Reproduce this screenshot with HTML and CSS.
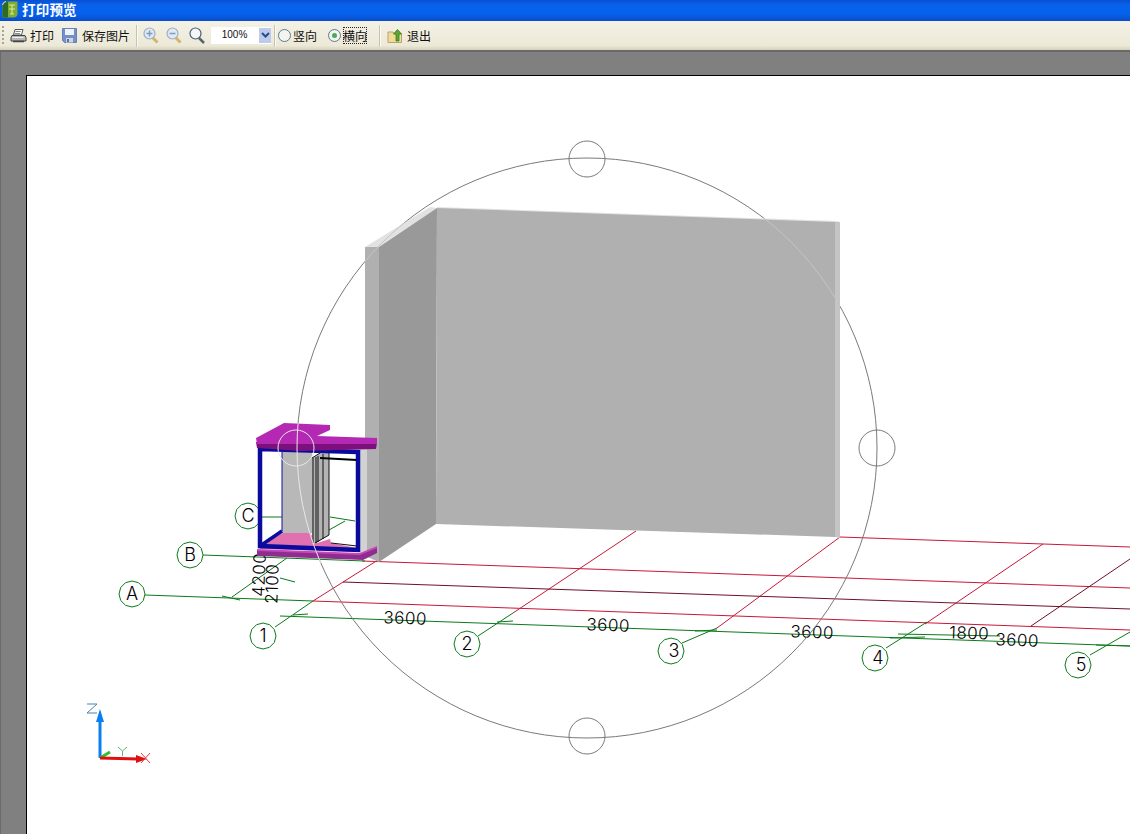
FILE: index.html
```html
<!DOCTYPE html>
<html lang="zh">
<head>
<meta charset="utf-8">
<title>打印预览</title>
<link rel="stylesheet" href="styles.css">
</head>
<body>
<div class="app">
  <header class="titlebar">
    <svg class="appicon" width="16" height="17" viewBox="0 0 16 17"><path d="M0.500 16.500V5Q1 1 5 0.500H15.500V13Q15 16 12 16.500Z" fill="#7fae2e"/><path d="M0.500 16.500V5Q1 1 5 0.500H6V16.500Z" fill="#2f6a22"/><path d="M0.500 4Q1 1 4 0.500" stroke="#f4e8a0" fill="none"/><path d="M7 4h6M7 8h6M10 4v9M8 13h4" stroke="#d8e8a8" stroke-width="1.100" fill="none"/></svg>
    <span class="title">打印预览</span>
  </header>
  <nav class="toolbar">
    <span class="grip"></span>
    <button class="tool t-print">
      <svg width="17" height="16" viewBox="0 0 17 16"><path d="M5 1.500h8l-1.500 5.500h-8z" fill="#fff" stroke="#555"/><path d="M5.500 3.500h5M5 5.500h5" stroke="#888"/><path d="M2 7.500h13l1 2v3.500H1v-3.500z" fill="#b8b8b8" stroke="#444"/><path d="M3 13.500h11" stroke="#444" stroke-width="1.500"/><path d="M2.500 9.500h11" stroke="#eee"/></svg>
      <span>打印</span>
    </button>
    <button class="tool t-save">
      <svg width="15" height="15" viewBox="0 0 15 15"><path d="M0.500 0.500h14v14h-12l-2-2z" fill="#7590c8" stroke="#6680b8"/><rect x="3" y="1" width="9" height="6" fill="#eef2fa"/><rect x="4" y="10" width="7" height="4.500" fill="#d0d4e0"/><rect x="5" y="11" width="2" height="3" fill="#5a70a8"/></svg>
      <span>保存图片</span>
    </button>
    <span class="sep s1"></span>
    <div class="zooms">
      <svg width="16" height="17" viewBox="0 0 16 17"><path d="M9.500 10.500l5 5" stroke="#d4b468" stroke-width="3"/><circle cx="6.500" cy="6.500" r="5.500" fill="#dfe8f4" stroke="#a0aec0" stroke-width="1.200"/><path d="M3.500 6.500h6M6.500 3.500v6" stroke="#7f9cc0" stroke-width="1.500"/></svg>
      <svg width="16" height="17" viewBox="0 0 16 17"><path d="M9.500 10.500l5 5" stroke="#d4b468" stroke-width="3"/><circle cx="6.500" cy="6.500" r="5.500" fill="#dfe8f4" stroke="#a0aec0" stroke-width="1.200"/><path d="M3.500 6.500h6" stroke="#7f9cc0" stroke-width="1.500"/></svg>
      <svg width="16" height="17" viewBox="0 0 16 17"><path d="M10 11l5 5" stroke="#5a6470" stroke-width="2.500"/><circle cx="6.500" cy="6.500" r="5.500" fill="#f4f6f8" stroke="#4a5c70" stroke-width="1.200"/></svg>
    </div>
    <div class="combo">
      <span class="combo-val">100%</span>
      <span class="combo-btn"><svg width="9" height="7" viewBox="0 0 9 7"><path d="M1 1l3.500 3.500L8 1" stroke="#2a4a8a" stroke-width="2" fill="none"/></svg></span>
    </div>
    <span class="sep s2"></span>
    <label class="radio r1"><span class="dot"></span><span>竖向</span></label>
    <label class="radio r2"><span class="dot on"></span><span class="focus">横向</span></label>
    <span class="sep s3"></span>
    <button class="tool t-exit">
      <svg width="16" height="16" viewBox="0 0 16 16"><path d="M1 4h5l1 1.500h7.500v9H1z" fill="#f0dc98" stroke="#b8a468"/><path d="M9 13V6H6.500L10.500 1.500 14.500 6H12v7z" fill="#58a838" stroke="#387818" stroke-width=".8"/></svg>
      <span>退出</span>
    </button>
  </nav>
  <main class="workspace">
    <section class="paper">
      <svg class="drawing" width="1103" height="758" viewBox="27 76 1103 758">
        <defs>
          <clipPath id="clip-wall"><polygon points="365,247 430,207 838,221 840,538 436,524 379,562 365,555"/></clipPath>
          <clipPath id="clip-box"><rect x="257" y="423" width="122" height="140"/></clipPath>
          <polygon id="bubble" points="13,0 11.300,6.500 6.500,11.300 0,13 -6.500,11.300 -11.300,6.500 -13,0 -11.300,-6.500 -6.500,-11.300 0,-13 6.500,-11.300 11.300,-6.500"/>
        </defs>

        <g class="red">
          <line x1="362" y1="561" x2="1130" y2="588"/>
          <line x1="313" y1="601" x2="1130" y2="630"/>
          <line x1="840" y1="537" x2="1130" y2="547"/>
          <line x1="313" y1="601" x2="378" y2="560"/>
          <line x1="513" y1="613" x2="636" y2="531"/>
          <line x1="717" y1="628" x2="840" y2="537"/>
          <line x1="925" y1="624" x2="1043" y2="544"/>
        </g>
        <g class="maroon">
          <line x1="343" y1="582" x2="1130" y2="609"/>
          <line x1="1031" y1="626" x2="1130" y2="559"/>
        </g>
        <g class="green">
          <line x1="203" y1="555" x2="365" y2="561"/>
          <line x1="145" y1="595" x2="313" y2="601"/>
          <line x1="222" y1="596" x2="240" y2="600"/>
          <line x1="258" y1="517" x2="282" y2="517"/>
          <line x1="330" y1="517" x2="355" y2="521"/>
          <line x1="329" y1="530" x2="345" y2="521"/>
          <line x1="232" y1="597" x2="287" y2="558"/>
          <line x1="280" y1="578" x2="295" y2="582"/>
          <line x1="275" y1="627" x2="313" y2="601"/>
          <line x1="280" y1="616" x2="1130" y2="646"/>
          <line x1="293" y1="615" x2="308" y2="614"/>
          <line x1="478" y1="636" x2="513" y2="613"/>
          <line x1="497" y1="622" x2="513" y2="621"/>
          <line x1="682" y1="643" x2="717" y2="628"/>
          <line x1="695" y1="631" x2="717" y2="630"/>
          <line x1="886" y1="648" x2="927" y2="622"/>
          <line x1="898" y1="634" x2="1000" y2="636"/>
          <line x1="890" y1="638" x2="925" y2="637"/>
          <line x1="1090" y1="655" x2="1130" y2="632"/>
          <line x1="1096" y1="645" x2="1130" y2="646"/>
          <use href="#bubble" x="248" y="516"/>
          <use href="#bubble" x="190" y="555"/>
          <use href="#bubble" x="132" y="594"/>
          <use href="#bubble" x="263" y="636"/>
          <use href="#bubble" x="467" y="644"/>
          <use href="#bubble" x="671" y="651"/>
          <use href="#bubble" x="875" y="658"/>
          <use href="#bubble" x="1078" y="665"/>
        </g>

        <g class="cad-text">
          <text x="248" y="522" class="lbl">C</text>
          <text x="190" y="561" class="lbl">B</text>
          <text x="132" y="600" class="lbl">A</text>
          <text x="263" y="642" class="lbl">1</text>
          <text x="467" y="650" class="lbl">2</text>
          <text x="674" y="657" class="lbl">3</text>
          <text x="878" y="664" class="lbl">4</text>
          <text x="1081" y="671" class="lbl">5</text>
          <text transform="translate(405 624) rotate(2)" class="dim">3600</text>
          <text transform="translate(608 631) rotate(2)" class="dim">3600</text>
          <text transform="translate(812 638) rotate(2)" class="dim">3600</text>
          <text transform="translate(969 639) rotate(2)" class="dim">1800</text>
          <text transform="translate(1017 646) rotate(2)" class="dim">3600</text>
          <text transform="translate(265 575) rotate(-88)" class="dim">4200</text>
          <text transform="translate(278 584) rotate(-88)" class="dim">2100</text>
        </g>

        <circle class="gizmo" cx="587" cy="448" r="290"/>
        <circle class="gizmo" cx="587" cy="159" r="18"/>
        <circle class="gizmo" cx="587" cy="736" r="18"/>
        <circle class="gizmo" cx="877" cy="448" r="18"/>

        <polygon class="w-top" points="365,247 430,207 437,208 379,247"/>
        <polygon class="w-top" points="437,207 838,221 838,223 437,209"/>
        <polygon class="w-side" points="379,247 437,208 436,524 379,562"/>
        <polygon class="w-narrow" points="365,247 379,247 379,562 365,556"/>
        <polygon class="w-main" points="437,208 835,222 835,537 436,524"/>
        <polygon class="w-edge" points="835,222 840,222 840,538 835,537"/>
        <circle class="gizmo-wall" cx="587" cy="448" r="290" clip-path="url(#clip-wall)"/>

        <polygon class="s-back" points="360,448 367,448 367,559 360,556"/>
        <rect class="s-core" x="282" y="452" width="30" height="81"/>
        <line class="s-thin" x1="282" y1="452" x2="282" y2="531"/>
        <polygon class="s-floor" points="260,544 283,533 310,533 317,543 330,539 331,543 357,548 357,552 260,549"/>
        <polygon class="s-col" points="312,458 320,453 329,453 329,535 315,544 312,544"/>
        <g class="s-black">
          <line x1="313" y1="458" x2="313" y2="543"/>
          <line x1="316" y1="457" x2="316" y2="543"/>
          <line x1="318" y1="456" x2="318" y2="542"/>
          <line x1="323" y1="454" x2="323" y2="539"/>
          <line x1="329" y1="453" x2="329" y2="535"/>
          <line x1="315" y1="543" x2="329" y2="535"/>
          <line x1="312" y1="458" x2="320" y2="453"/>
          <line x1="331" y1="543" x2="357" y2="546"/>
        </g>
        <line class="s-blackbar" x1="320" y1="458" x2="357" y2="460"/>
        <polygon class="s-lowtop" points="257,549 360,553 377,546 377,549 360,556 257,552"/>
        <polygon class="s-lowfront" points="257,551 360,555 377,548 377,553 363,560 257,556"/>
        <g class="s-blue">
          <polygon points="260,449 358,452 358,550 260,546"/>
          <line x1="260" y1="546" x2="282" y2="531"/>
        </g>
        <polygon class="s-slabfront" points="256,442 377,443 376,449 300,451 257,448"/>
        <polygon class="s-slabtop" points="284,423 330,425 330,430 317,436 377,438 377,444 257,444 256,438"/>
        <g clip-path="url(#clip-box)">
          <circle class="gizmo-box" cx="587" cy="448" r="290"/>
        </g>
        <circle class="gizmo-box" cx="296" cy="448" r="18"/>

        <g class="axes">
          <line class="ax-z" x1="100" y1="758" x2="100" y2="716"/>
          <polygon class="ax-zh" points="100,709 104,722 96,722"/>
          <line class="ax-y" x1="100" y1="758" x2="110" y2="752"/>
          <line class="ax-x" x1="100" y1="758" x2="138" y2="759"/>
          <polygon class="ax-xh" points="147,759 136,755 136,763"/>
          <path class="ax-zt" d="M87 704h10l-10 9h10"/>
          <path class="ax-yt" d="M118 747l4.500 4 4.500-4M122.500 751v5"/>
          <path class="ax-xt" d="M141 753l9 10M150 753l-9 10"/>
        </g>
      </svg>
    </section>
  </main>
</div>
</body>
</html>
```
FILE: styles.css
```css
html, body {
  margin: 0;
  padding: 0;
  height: 100%;
  overflow: hidden;
}
body {
  font-family: "Noto Sans CJK SC", "Liberation Sans", sans-serif;
  font-size: 12px;
  color: #111;
}
.app {
  display: flex;
  flex-direction: column;
  width: 1130px;
  height: 834px;
  overflow: hidden;
}
.titlebar {
  display: flex;
  align-items: center;
  gap: 4px;
  height: 21px;
  box-sizing: border-box;
  padding: 0 0 3px 2px;
  flex: none;
  background: linear-gradient(#0a50d0 0, #0862ee 25%, #0560ea 70%, #0a4cc8 100%);
}
.appicon { flex: none; }
.title {
  color: #fff;
  font-weight: 700;
  font-size: 13.500px;
  line-height: 18px;
  letter-spacing: .2px;
}
.toolbar {
  display: flex;
  align-items: center;
  height: 29px;
  flex: none;
  box-sizing: border-box;
  background: linear-gradient(#f4f2e6, #ece9d8 85%, #d4d0bc);
  padding-left: 2px;
}
.grip {
  width: 2px;
  height: 20px;
  flex: none;
  background: repeating-linear-gradient(#a8a594 0 2px, transparent 2px 4px);
}
.tool {
  display: flex;
  align-items: center;
  background: none;
  border: 0;
  padding: 0;
  font: inherit;
  color: #111;
  height: 20px;
}
.t-print { gap: 3px; margin-left: 6px; }
.t-save { gap: 5px; margin-left: 8px; }
.t-exit { gap: 4px; margin-left: 6px; }
.sep {
  width: 1px;
  height: 22px;
  flex: none;
  background: #c6c3b0;
  border-right: 1px solid #fbfaf4;
}
.s1 { margin-left: 6px; }
.zooms {
  display: flex;
  gap: 7px;
  margin-left: 5px;
  align-items: center;
}
.combo {
  display: flex;
  align-items: center;
  width: 60px;
  height: 17px;
  margin-left: 6px;
  background: #fff;
}
.combo-val {
  flex: 1;
  padding-bottom: 3px;
  padding-right: 1px;
  text-align: center;
  font-family: "Liberation Sans", sans-serif;
  font-size: 10px;
}
.combo-btn {
  display: flex;
  align-items: center;
  justify-content: center;
  width: 12px;
  height: 15px;
  background: #bccaec;
}
.s2 { margin-left: 3px; }
.radio {
  display: flex;
  align-items: center;
  gap: 2px;
}
.r1 { margin-left: 2px; }
.r2 { margin-left: 11px; }
.dot {
  display: flex;
  align-items: center;
  justify-content: center;
  box-sizing: border-box;
  width: 13px;
  height: 13px;
  border: 1px solid #5a7a98;
  border-radius: 50%;
  background: #f4f4ee;
}
.dot.on::after {
  content: "";
  width: 5px;
  height: 5px;
  border-radius: 50%;
  background: #4aa860;
}
.focus { outline: 1px dotted #222; outline-offset: -1px; }
.s3 { margin-left: 12px; }
.workspace {
  flex: 1;
  min-height: 0;
  background: #808080;
  padding: 25px 0 0 26px;
  overflow: hidden;
  box-shadow: inset 1px 2px 0 #6a6a6a;
}
.paper {
  background: #fff;
  border-top: 1px solid #000;
  border-left: 1px solid #000;
  height: 100%;
  box-sizing: border-box;
  overflow: hidden;
}
.drawing { display: block; }

.red line { stroke: #c81838; stroke-width: 1; }
.maroon line { stroke: #701028; stroke-width: 1; }
.green line { stroke: #0a7a1a; stroke-width: 1; }
.green use { fill: #fff; stroke: #0a7a1a; stroke-width: 1; }
.cad-text text {
  font-family: "Inter", "Liberation Sans", sans-serif;
  font-weight: 300;
  fill: #000;
  text-anchor: middle;
}
.lbl { font-size: 18px; }
.dim { font-size: 17px; letter-spacing: .5px; }

.gizmo { fill: none; stroke: #7a7a7a; stroke-width: 1; }
.gizmo-wall { fill: none; stroke: #c4c4c4; stroke-width: 1; }
.gizmo-box { fill: none; stroke: #e8e8e8; stroke-width: 1; }

.w-top { fill: #e2e2e2; }
.w-side { fill: #999; }
.w-narrow { fill: #b0b0b0; }
.w-main { fill: #b0b0b0; }
.w-edge { fill: #c4c4c4; }

.s-back { fill: #d2d2d2; }
.s-core { fill: #b8b8b8; }
.s-thin { stroke: #1010a0; stroke-width: 1; }
.s-floor { fill: #e070b0; }
.s-col { fill: #b4b4b4; }
.s-black line { stroke: #111; stroke-width: 1; }
.s-blackbar { stroke: #000; stroke-width: 2; }
.s-lowfront { fill: #8f2c90; }
.s-lowtop { fill: #c848b8; }
.s-blue polygon { fill: none; stroke: #0a0a9c; stroke-width: 4.500; }
.s-blue line { stroke: #0a0a9c; stroke-width: 3.500; }
.s-slabtop { fill: #b428b4; }
.s-slabfront { fill: #7c107c; }

.ax-z { stroke: #0a80f0; stroke-width: 3; }
.ax-zh { fill: #0a80f0; }
.ax-y { stroke: #30c030; stroke-width: 3; }
.ax-x { stroke: #e01010; stroke-width: 3; }
.ax-xh { fill: #e01010; }
.ax-zt { fill: none; stroke: #4a80b8; stroke-width: 1; }
.ax-yt { fill: none; stroke: #50c070; stroke-width: 1; }
.ax-xt { fill: none; stroke: #e04040; stroke-width: 1; }
```
